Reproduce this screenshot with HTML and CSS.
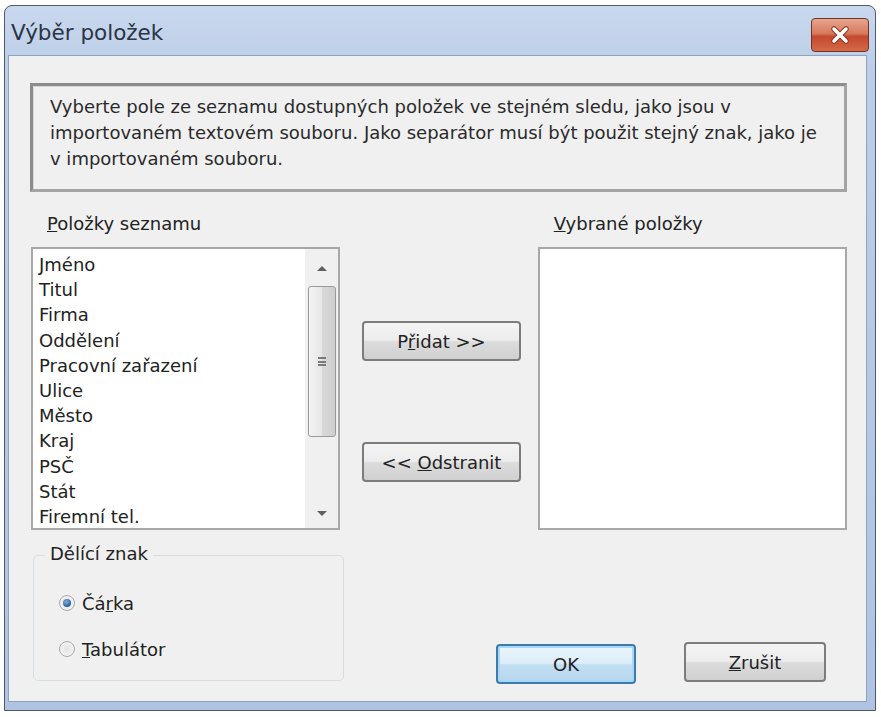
FILE: index.html
```html
<html>

<head>
    <link rel="stylesheet" href="styles.css">
</head>

<body>
    <div class="window">
        <div class="titlebar">
            <span class="title">Výběr položek</span>
            <div class="close">
                <svg width="22" height="18" viewBox="0 0 22 18">
                    <path d="M5 3 L17 15 M17 3 L5 15" stroke="#8a3a26" stroke-width="5.5" stroke-linecap="round" />
                    <path d="M5 3 L17 15 M17 3 L5 15" stroke="#ffffff" stroke-width="3.5" stroke-linecap="round" />
                </svg>
            </div>
        </div>

        <div class="client">
            <div class="desc">
                Vyberte pole ze seznamu dostupných položek ve stejném sledu, jako jsou v<br>
                importovaném textovém souboru. Jako separátor musí být použit stejný znak, jako je<br>
                v importovaném souboru.
            </div>

            <div class="lists">
                <div class="list-col">
                    <div class="list-label"><u>P</u>oložky seznamu</div>
                    <div class="listbox">
                        <ul class="items">
                            <li>Jméno</li>
                            <li>Titul</li>
                            <li>Firma</li>
                            <li>Oddělení</li>
                            <li>Pracovní zařazení</li>
                            <li>Ulice</li>
                            <li>Město</li>
                            <li>Kraj</li>
                            <li>PSČ</li>
                            <li>Stát</li>
                            <li>Firemní tel.</li>
                        </ul>
                        <div class="scrollbar">
                            <div class="arrow up"></div>
                            <div class="thumb">
                                <div class="grip"></div>
                            </div>
                            <div class="arrow down"></div>
                        </div>
                    </div>
                </div>

                <div class="mid">
                    <div class="btn"><span>P<u>ř</u>idat &gt;&gt;</span></div>
                    <div class="btn"><span>&lt;&lt; <u>O</u>dstranit</span></div>
                </div>

                <div class="list-col">
                    <div class="list-label"><u>V</u>ybrané položky</div>
                    <div class="listbox"></div>
                </div>
            </div>

            <div class="bottom">
                <div class="group">
                    <div class="legend">Dělící znak</div>
                    <div class="radio">
                        <span class="dot checked"></span>
                        <span>Čá<u>r</u>ka</span>
                    </div>
                    <div class="radio">
                        <span class="dot"></span>
                        <span><u>T</u>abulátor</span>
                    </div>
                </div>
                <div class="actions">
                    <div class="btn ok">OK</div>
                    <div class="btn cancel"><span><u>Z</u>rušit</span></div>
                </div>
            </div>
        </div>
    </div>
</body>

</html>
```

FILE: styles.css
```css
html {
    background-color: #ffffff;
    font-family: 'DejaVu Sans', Verdana, sans-serif;
    color: #222222;
}

body {
    margin: 0;
    padding: 5px 3px 4px 4px;
}

.window {
    width: 872px;
    height: 706px;
    border: 1px solid #4e5a6c;
    border-radius: 8px 8px 0 0;
    background: linear-gradient(#c9d8ee, #bccee8 60px, #aec4e2);
    padding: 0 8px 8px 3px;
    box-sizing: border-box;
    display: flex;
    flex-direction: column;
}

.titlebar {
    height: 49px;
    display: flex;
    align-items: center;
    justify-content: space-between;
    flex-shrink: 0;
}

.title {
    font-size: 21.5px;
    color: #2a3444;
    padding-left: 3px;
    padding-top: 4px;
}

.close {
    width: 58px;
    height: 34px;
    margin-top: 8px;
    margin-right: -2px;
    border: 1px solid #6e3426;
    border-radius: 4px;
    box-sizing: border-box;
    background: linear-gradient(#e8a58e, #d77a5e 45%, #c4482c 55%, #d56a48);
    display: flex;
    align-items: center;
    justify-content: center;
}

.client {
    flex: 1;
    background: #f0f0f0;
    border: 1px solid #8fa3bd;
    padding: 27px 19px 0 21px;
    display: flex;
    flex-direction: column;
}

.desc {
    height: 109px;
    box-sizing: border-box;
    border: 3px solid #a4a4a4;
    border-top-color: #8c8c8c;
    border-left-color: #8c8c8c;
    box-shadow: inset 1px 1px 0 #d8d8d8;
    padding: 8px 0 0 17px;
    font-size: 18px;
    line-height: 26px;
    color: #2a2a2a;
}

.lists {
    display: flex;
    margin-top: 20px;
    padding-left: 1px;
}

.list-col {
    width: 310px;
    display: flex;
    flex-direction: column;
}

.list-label {
    font-size: 18px;
    height: 35px;
    line-height: 24px;
    padding-left: 16px;
}

.listbox {
    height: 283px;
    background: #ffffff;
    border: 2px solid #a8a8a8;
    box-sizing: border-box;
    display: flex;
    overflow: hidden;
}

.items {
    list-style: none;
    margin: 0;
    padding: 3px 0 0 6px;
    flex: 1;
    font-size: 18px;
    line-height: 25.2px;
    white-space: nowrap;
}

.scrollbar {
    width: 33px;
    background: #f0f0f0;
    display: flex;
    flex-direction: column;
    align-items: center;
}

.arrow {
    width: 0;
    height: 0;
    border-left: 5px solid transparent;
    border-right: 5px solid transparent;
}

.arrow.up {
    border-bottom: 5px solid #606060;
    margin: 17px 0 15px;
}

.arrow.down {
    border-top: 5px solid #606060;
    margin: auto 0 12px;
}

.thumb {
    width: 28px;
    height: 151px;
    box-sizing: border-box;
    border: 1px solid #9a9a9a;
    border-radius: 3px;
    background: linear-gradient(90deg, #f4f4f4, #e6e6e6 50%, #d8d8d8 51%, #cfcfcf);
    display: flex;
    align-items: center;
    justify-content: center;
}

.grip {
    width: 8px;
    height: 9px;
    border-top: 2px solid #7a7a7a;
    border-bottom: 2px solid #7a7a7a;
    box-sizing: border-box;
}

.grip::after {
    content: "";
    display: block;
    height: 2px;
    margin-top: 1.5px;
    background: #7a7a7a;
}

.mid {
    width: 198px;
    display: flex;
    flex-direction: column;
    align-items: center;
    padding-top: 109px;
    gap: 81px;
}

.btn {
    width: 159px;
    height: 40px;
    box-sizing: border-box;
    border: 2px solid #7c7c7c;
    border-radius: 4px;
    background: linear-gradient(#f4f4f4, #ececec 48%, #dcdcdc 52%, #d0d0d0);
    font-size: 18px;
    display: flex;
    align-items: center;
    justify-content: center;
    margin-left: 5px;
}

.bottom {
    display: flex;
    align-items: flex-start;
    margin-top: 25px;
}

.group {
    width: 311px;
    height: 126px;
    margin-left: 3px;
    border: 1px solid #d6dde2;
    border-radius: 5px;
    box-sizing: border-box;
    position: relative;
    padding: 35px 0 0 25px;
}

.legend {
    position: absolute;
    top: -13px;
    left: 11px;
    background: #f0f0f0;
    padding: 0 5px;
    font-size: 18px;
}

.radio {
    display: flex;
    align-items: center;
    gap: 7px;
    font-size: 18px;
    height: 24px;
    margin-bottom: 22px;
}

.dot {
    width: 14px;
    height: 14px;
    border-radius: 50%;
    border: 1px solid #a9a9a9;
    background: radial-gradient(#e4e4e4, #f8f8f8);
    display: flex;
    align-items: center;
    justify-content: center;
}

.dot.checked::after {
    content: "";
    width: 8px;
    height: 8px;
    border-radius: 50%;
    background: radial-gradient(circle at 40% 35%, #7fb0e0, #2a5f9a 70%);
}

.actions {
    display: flex;
    gap: 48px;
    margin-left: 152px;
    margin-top: 87px;
}

.btn.ok {
    width: 140px;
    margin-left: 0;
    border-color: #3d7bad;
    box-shadow: inset 0 0 0 2px #a8d8f6;
    background: linear-gradient(#eaf5fc, #dcedf8 48%, #c2dff2 52%, #b6d6ee);
    margin-top: 2px;
}

.btn.cancel {
    width: 142px;
    margin-left: 0;
}
```
